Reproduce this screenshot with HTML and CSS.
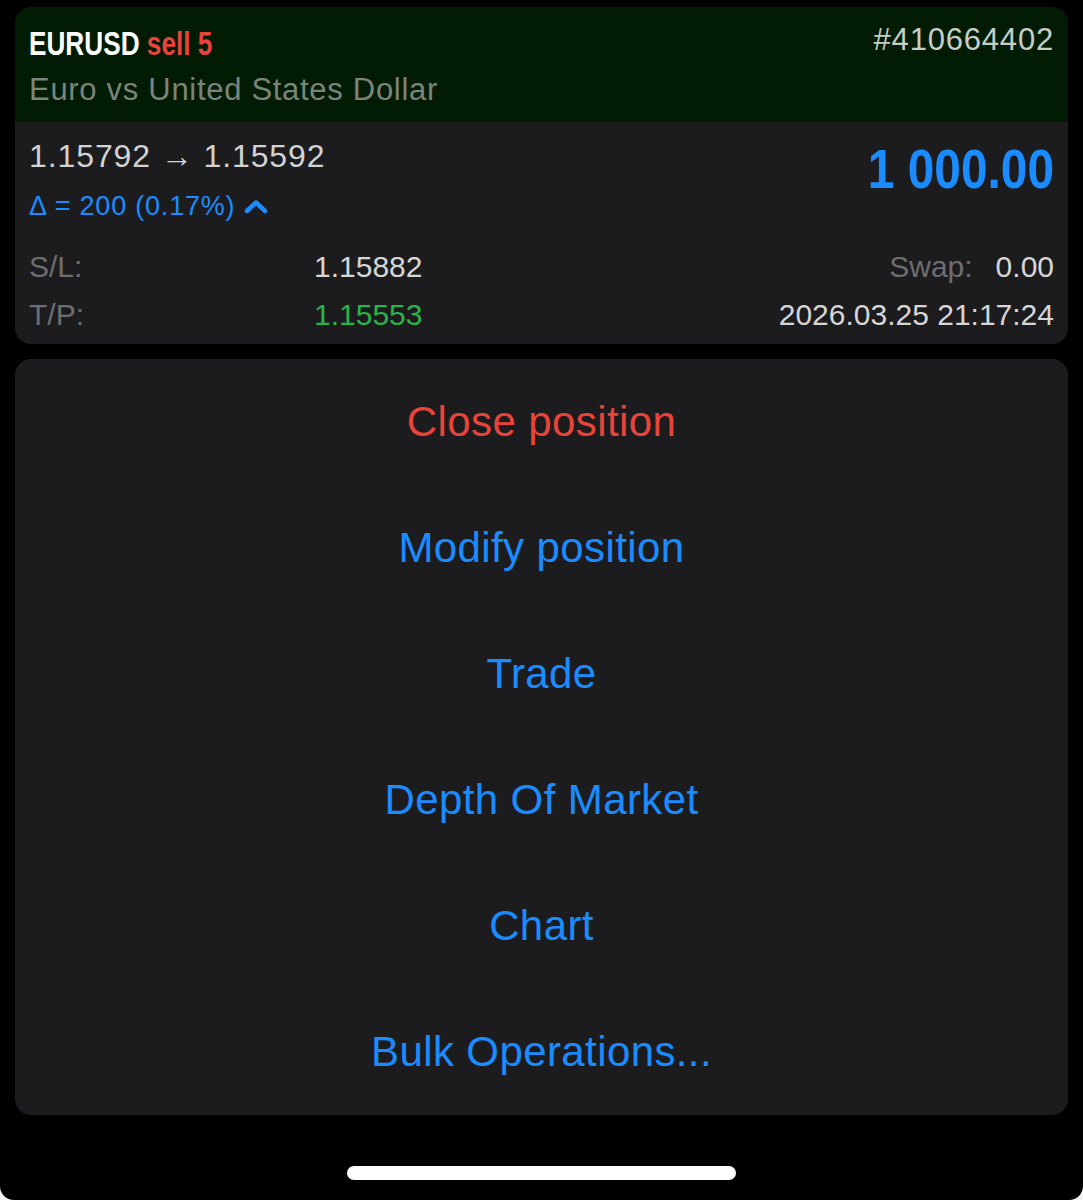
FILE: index.html
```html
<!DOCTYPE html>
<html lang="en">
<head>
    <meta charset="UTF-8">
    <meta name="viewport" content="width=device-width, initial-scale=1.0">
    <title>Position EURUSD</title>
    <link rel="stylesheet" href="styles.css">
</head>
<body>
    <div class="screen">
        <div class="position-card">
            <div class="card-header">
                <div class="header-row">
                    <div class="symbol">EURUSD <span class="side">sell 5</span></div>
                    <div class="ticket">#410664402</div>
                </div>
                <div class="description">Euro vs United States Dollar</div>
            </div>
            <div class="card-body">
                <div class="price-row">
                    <div class="prices">
                        <div class="price-move">1.15792 &rarr; 1.15592</div>
                        <div class="delta">&Delta; = 200 (0.17%)
                            <svg class="chevron" width="24" height="15" viewBox="0 0 24 15">
                                <path d="M3 12 L12 3.5 L21 12" fill="none" stroke="currentColor" stroke-width="4.5" stroke-linecap="round" stroke-linejoin="round"/>
                            </svg>
                        </div>
                    </div>
                    <div class="profit">1 000.00</div>
                </div>
                <div class="details">
                    <div class="detail-row">
                        <span class="label">S/L:</span>
                        <span class="value">1.15882</span>
                        <span class="right"><span class="label">Swap:</span><span class="value swap">0.00</span></span>
                    </div>
                    <div class="detail-row">
                        <span class="label">T/P:</span>
                        <span class="value tp">1.15553</span>
                        <span class="right"><span class="value">2026.03.25 21:17:24</span></span>
                    </div>
                </div>
            </div>
        </div>

        <div class="actions">
            <div class="action danger">Close position</div>
            <div class="action">Modify position</div>
            <div class="action">Trade</div>
            <div class="action">Depth Of Market</div>
            <div class="action">Chart</div>
            <div class="action">Bulk Operations...</div>
        </div>

        <div class="home-bar"></div>
    </div>
</body>
</html>
```

FILE: styles.css
```css
html, body {
    margin: 0;
    padding: 0;
}
body {
    background: #f2f2f2;
    font-family: "Liberation Sans", Arial, sans-serif;
}
.screen {
    width: 1083px;
    height: 1200px;
    background: #000;
    border-radius: 0 0 14px 14px;
    padding: 7px 15px 0;
    box-sizing: border-box;
    display: flex;
    flex-direction: column;
}
.position-card {
    border-radius: 16px;
    overflow: hidden;
    background: #1c1c1e;
}
.card-header {
    background: #011c03;
    height: 115px;
    padding: 14px 14px 0;
    box-sizing: border-box;
}
.header-row {
    display: flex;
    justify-content: space-between;
    align-items: flex-start;
}
.symbol {
    font-weight: bold;
    font-size: 34px;
    line-height: 44px;
    color: #fff;
    white-space: nowrap;
    transform: scaleX(0.77);
    transform-origin: left center;
}
.side {
    color: #e8443a;
}
.ticket {
    font-size: 31px;
    line-height: 38px;
    letter-spacing: 0.8px;
    color: #c6cec6;
}
.description {
    font-size: 31px;
    line-height: 36px;
    letter-spacing: 0.7px;
    color: #7b847b;
    margin-top: 7px;
}
.card-body {
    padding: 16px 14px 5px;
}
.price-row {
    display: flex;
    justify-content: space-between;
    align-items: flex-start;
}
.price-move {
    font-size: 32px;
    line-height: 36px;
    letter-spacing: 0.9px;
    color: #d2d2d2;
}
.delta {
    font-size: 27px;
    line-height: 30px;
    letter-spacing: 0.8px;
    color: #1a8cff;
    margin-top: 17px;
    display: flex;
    align-items: center;
    gap: 9px;
}
.chevron {
    color: #1a8cff;
}
.profit {
    font-weight: bold;
    font-size: 55px;
    line-height: 60px;
    color: #1a8cff;
    margin-top: 1px;
    white-space: nowrap;
    transform: scaleX(0.87);
    transform-origin: right center;
}
.details {
    margin-top: 22px;
}
.detail-row {
    display: grid;
    grid-template-columns: 285px auto 1fr;
    align-items: baseline;
    font-size: 30px;
    line-height: 48px;
}
.label {
    color: #6e6e70;
}
.value {
    color: #d6d6d6;
}
.tp {
    color: #2bb34a;
}
.right {
    text-align: right;
}
.swap {
    margin-left: 23px;
}
.actions {
    margin-top: 15px;
    background: #1c1c1e;
    border-radius: 16px;
    display: flex;
    flex-direction: column;
}
.action {
    height: 126px;
    display: flex;
    align-items: center;
    justify-content: center;
    font-size: 42px;
    letter-spacing: 0.4px;
    color: #1a8cff;
}
.action.danger {
    color: #e8443a;
}
.home-bar {
    width: 389px;
    height: 14px;
    background: #fff;
    border-radius: 7px;
    margin: 51px auto 0;
}
```
